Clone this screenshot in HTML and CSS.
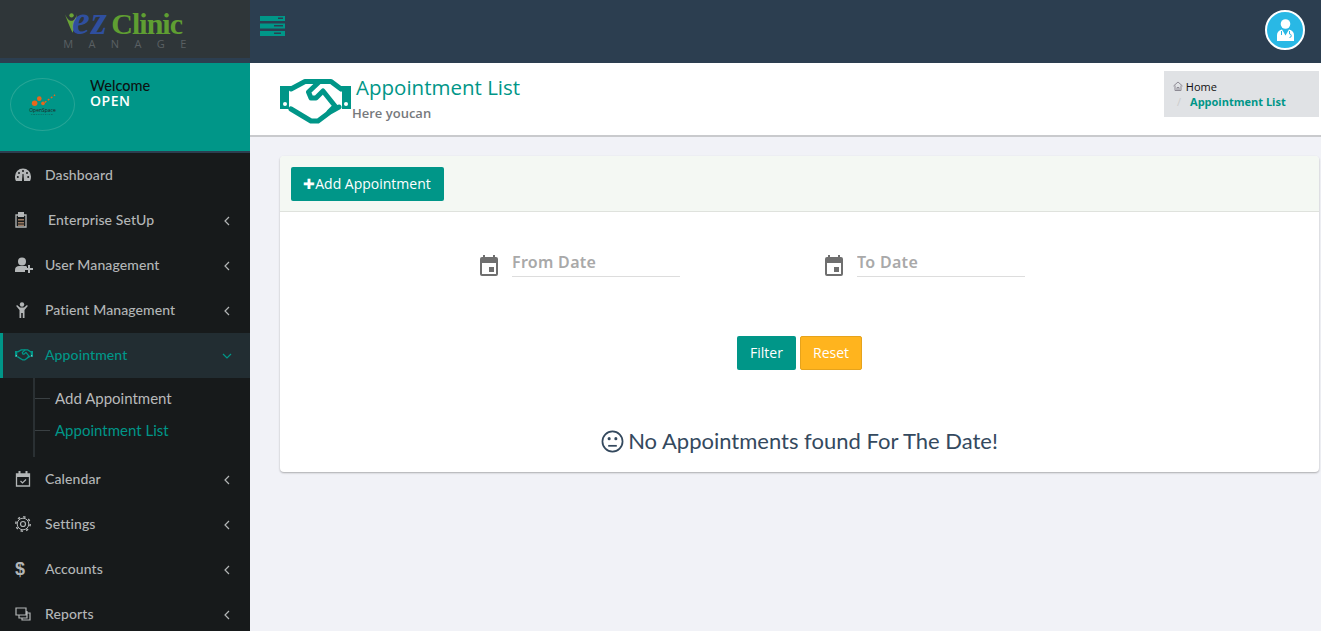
FILE: index.html
```html
<!DOCTYPE html>
<html lang="en">
<head>
  <meta charset="UTF-8">
  <title>Appointment List</title>
  <link rel="stylesheet" href="styles.css">
</head>
<body>

<svg class="defs" width="0" height="0">
  <symbol id="shake" viewBox="0 0 71 45">
    <path fill="currentColor" d="M0 7h13l-4 4v19H0zM71 7H59l3 4v19h9z"/>
    <g fill="none" stroke="currentColor" stroke-width="5" stroke-linecap="round" stroke-linejoin="round">
      <path d="M11 10L25 2.500h26L61 10"/>
      <path d="M11 30l20 12h7l12-9 9-5"/>
      <path d="M39 3L28.500 13l2.500 6h5l7-7 12 15-6 6"/>
    </g>
    <circle cx="5" cy="25" r="2" fill="#fff"/>
    <circle cx="66" cy="25" r="2" fill="#fff"/>
  </symbol>
  <symbol id="chev-left" viewBox="0 0 8 12">
    <path d="M6 2L2 6l4 4" fill="none" stroke="currentColor" stroke-width="1.200"/>
  </symbol>
  <symbol id="cal" viewBox="0 0 18 21">
    <path fill="currentColor" d="M3 0h2v2h8V0h2v2h1a2 2 0 0 1 2 2v15a2 2 0 0 1-2 2H2a2 2 0 0 1-2-2V4a2 2 0 0 1 2-2h1zM2 8v11h14V8z"/>
    <path fill="currentColor" d="M9 12h5v5H9z"/>
  </symbol>
</svg>

<div class="app">

  <div class="brand">
    <div class="logo">
      <div class="logo-top">
        <svg class="logo-man" width="12" height="22" viewBox="0 0 11 20">
          <circle cx="6" cy="3" r="2" fill="#6aa436"/>
          <path d="M0 2c2 4 3 5 5 6h2c2-1 3-3 4-6-1 6-2 11-4 17C5 15 2 8 0 2z" fill="#6aa436"/>
        </svg>
        <span class="logo-ez">ez</span>
        <span class="logo-clinic">Clinic</span>
      </div>
      <div class="logo-sub">MANAGE</div>
    </div>
  </div>

  <header class="topbar">
    <svg class="menu-toggle" width="25" height="20" viewBox="0 0 25 20">
      <path fill="#009688" d="M0 0h25v5H0zM0 7.500h25v5H0zM0 15h25v5H0z"/>
      <path fill="#2c3e50" d="M18 1.500h5v1.500h-5zM14 9h9v1.500h-9zM14 16.500h7v1.500h-7z"/>
    </svg>
    <span class="avatar">
      <svg width="17" height="22" viewBox="0 0 17 22">
        <circle cx="8.500" cy="5" r="4.800" fill="#fff"/>
        <path fill="#fff" d="M5 10.500C2 11.500 0 13 0 16v6h17v-6c0-3-2-4.500-5-5.500l-3.500 6z"/>
        <path fill="none" stroke="#29b8e5" stroke-width="1" d="M4.500 12v4M12.500 12v3a1.500 1.500 0 0 1 0 3.500"/>
      </svg>
    </span>
  </header>

  <aside class="sidebar">
    <div class="welcome">
      <div class="org-logo">
        <svg width="30" height="13" viewBox="0 0 30 14">
          <circle cx="6" cy="10" r="3" fill="#e8671c"/>
          <circle cx="11" cy="5" r="2.500" fill="#e8671c"/>
          <circle cx="15" cy="10" r="2" fill="#e8671c"/>
          <path d="M17 9l11-8" stroke="#e8671c" stroke-width="1.500" stroke-dasharray="2 2"/>
        </svg>
        <span class="org-name">OpenSpace</span>
        <span class="org-tag">CONSULTING</span>
      </div>
      <div class="welcome-text">
        <div class="welcome-hello">Welcome</div>
        <div class="welcome-name">OPEN</div>
      </div>
    </div>

    <nav class="menu">
      <a class="menu-item">
        <svg class="menu-icon" viewBox="0 0 16 16">
          <path fill="currentColor" d="M8 1.500a8 8 0 0 0-8 8c0 2 .5 3.500 1 4.500h14c.5-1 1-2.500 1-4.500a8 8 0 0 0-8-8z"/>
          <g fill="#171a1b"><circle cx="8" cy="4" r="1"/><circle cx="4" cy="6" r="1"/><circle cx="12" cy="6" r="1"/><circle cx="2.800" cy="10" r="1"/><circle cx="13.200" cy="10" r="1"/><path d="M7 14l.5-7h1l.5 7z"/></g>
        </svg>
        <span class="menu-label">Dashboard</span>
      </a>
      <a class="menu-item">
        <svg class="menu-icon menu-icon-narrow" viewBox="0 0 12 16">
          <path fill="none" stroke="currentColor" stroke-width="1.300" d="M1 3h10v12H1z"/>
          <path fill="currentColor" d="M3 0h6v5H3z"/>
          <path fill="#9a7a62" d="M3 7h6v1.500H3zM3 10h6v1.500H3zM3 12.500h6V14H3z"/>
        </svg>
        <span class="menu-label menu-label-wide">Enterprise SetUp</span>
        <svg class="chev"><use href="#chev-left"/></svg>
      </a>
      <a class="menu-item">
        <svg class="menu-icon menu-icon-wide" viewBox="0 0 18 16"><circle cx="7" cy="4.500" r="4" fill="currentColor"/><path fill="currentColor" d="M0 15v-2c0-3 2-4 4-4h6c1 0 2 .5 2 1v2h-2v3z"/><path fill="currentColor" d="M13 8h2v3h3v2h-3v3h-2v-3h-3v-2h3z"/></svg>
        <span class="menu-label">User Management</span>
        <svg class="chev"><use href="#chev-left"/></svg>
      </a>
      <a class="menu-item">
        <svg class="menu-icon" viewBox="0 0 16 16"><circle cx="7" cy="2.500" r="2.200" fill="currentColor"/><path fill="currentColor" d="M2 3l3 2.500h4L12 3l.8 1L9.500 8v8H7.800v-5H6.200v5H4.500V8L1.200 4z"/></svg>
        <span class="menu-label">Patient Management</span>
        <svg class="chev"><use href="#chev-left"/></svg>
      </a>
      <a class="menu-item menu-item-open">
        <svg class="menu-icon menu-icon-wide"><use href="#shake"/></svg>
        <span class="menu-label">Appointment</span>
        <svg class="chev chev-down" viewBox="0 0 12 8"><path d="M2 2l4 4 4-4" fill="none" stroke="currentColor" stroke-width="1.200"/></svg>
      </a>
      <div class="submenu">
        <a class="sub-item">Add Appointment</a>
        <a class="sub-item sub-item-active">Appointment List</a>
      </div>
      <a class="menu-item">
        <svg class="menu-icon" viewBox="0 0 15 16"><path fill="none" stroke="currentColor" stroke-width="1.300" d="M1 3h13v12H1z"/><path fill="currentColor" d="M1 3h13v3H1zM3 0h2v3H3zM10 0h2v3h-2z"/><path fill="none" stroke="currentColor" stroke-width="1.200" d="M5 10l2 2 3.500-3.500"/></svg>
        <span class="menu-label">Calendar</span>
        <svg class="chev"><use href="#chev-left"/></svg>
      </a>
      <a class="menu-item">
        <svg class="menu-icon" viewBox="0 0 16 16">
          <g fill="none" stroke="currentColor">
            <circle cx="8" cy="8" r="2.500" stroke-width="1.200"/>
            <circle cx="8" cy="8" r="5.800" stroke-width="1"/>
            <circle cx="8" cy="8" r="7.200" stroke-width="1.500" stroke-dasharray="2.400 3.250"/>
          </g>
        </svg>
        <span class="menu-label">Settings</span>
        <svg class="chev"><use href="#chev-left"/></svg>
      </a>
      <a class="menu-item">
        <span class="menu-icon menu-dollar">$</span>
        <span class="menu-label">Accounts</span>
        <svg class="chev"><use href="#chev-left"/></svg>
      </a>
      <a class="menu-item">
        <svg class="menu-icon" viewBox="0 0 16 14"><path fill="none" stroke="currentColor" stroke-width="1.200" d="M1 1h10v7H1zM4 8v3h8V4M7 11v2h8V6h-3"/></svg>
        <span class="menu-label">Reports</span>
        <svg class="chev"><use href="#chev-left"/></svg>
      </a>
    </nav>
  </aside>

  <main class="content">
    <section class="page-head">
      <svg class="page-icon"><use href="#shake"/></svg>
      <div class="page-titles">
        <h1>Appointment List</h1>
        <p>Here youcan</p>
      </div>
      <div class="crumbs">
        <div class="crumb-home">
          <svg width="10" height="10" viewBox="0 0 10 10"><path fill="none" stroke="#8d8a94" d="M.500 5L5 1l4.500 4M2 4.500v5h6v-5M4 9.500V6.500h2v3"/></svg>
          Home
        </div>
        <div class="crumb-current"><span class="crumb-sep">/</span>Appointment List</div>
      </div>
    </section>

    <section class="card">
      <div class="card-head">
        <button class="btn btn-teal btn-add"><span class="plus">&#10010;</span>Add Appointment</button>
      </div>
      <div class="card-body">
        <div class="date-row">
          <div class="date-field">
            <svg class="date-icon"><use href="#cal"/></svg>
            <input class="date-input" placeholder="From Date">
          </div>
          <div class="date-field">
            <svg class="date-icon"><use href="#cal"/></svg>
            <input class="date-input" placeholder="To Date">
          </div>
        </div>
        <div class="actions">
          <button class="btn btn-teal">Filter</button>
          <button class="btn btn-amber">Reset</button>
        </div>
        <h2 class="empty">
          <svg width="23" height="23" viewBox="0 0 24 24"><g fill="none" stroke="#34495e" stroke-width="1.800"><circle cx="12" cy="12" r="10.500"/><path d="M7.500 16.500h9"/></g><circle cx="8.500" cy="9" r="1.600" fill="#34495e"/><circle cx="15.500" cy="9" r="1.600" fill="#34495e"/></svg>
          No Appointments found For The Date!
        </h2>
      </div>
    </section>
  </main>

</div>

</body>
</html>
```

FILE: styles.css
```css
* { box-sizing: border-box; }
html, body { height: 100%; }
body { margin: 0; font-family: "Open Sans", sans-serif; background: #f1f2f7; color: #333; overflow: hidden; }
.defs { position: absolute; }
a { cursor: pointer; text-decoration: none; }

.app { display: grid; grid-template-columns: 250px 1fr; grid-template-rows: 63px 1fr; height: 100vh; }

/* top row */
.brand { background: #2c3e50; padding-bottom: 5px; }
.logo { height: 58px; background: #2f3639; display: flex; flex-direction: column; align-items: center; padding-top: 6px; }
.logo-top { display: flex; align-items: baseline; height: 30px; margin-left: -3px; }
.logo-man { align-self: flex-start; margin: 6px -5px 0 0; }
.logo-ez { font: italic bold 40px/30px "Liberation Serif", serif; color: #2f4f9f; letter-spacing: 1.500px; }
.logo-clinic { font: bold 30px/30px "Liberation Serif", serif; color: #5f9e32; margin-left: 3px; letter-spacing: -1px; }
.logo-sub { font: 11px/12px "Open Sans", sans-serif; color: #5a6063; letter-spacing: 15.400px; margin: 2px -15px 0 0; }

.topbar { background: #2c3e50; display: flex; justify-content: space-between; padding: 16px 16px 0 10px; }
.menu-toggle { display: block; }
.avatar { width: 40px; height: 40px; margin-top: -6px; border-radius: 50%; background: #29b8e5; border: 2px solid #fff; display: flex; align-items: center; justify-content: center; }

/* sidebar */
.sidebar { background: #171a1b; overflow: hidden; }
.welcome { height: 90px; background: #009688; border-bottom: 2px solid #2c3e50; display: flex; padding: 15px 0 0 10px; }
.org-logo { width: 65px; height: 53px; border-radius: 50%; border: 1px solid #26a596; display: flex; flex-direction: column; align-items: center; justify-content: center; }
.org-name { font-size: 5px; line-height: 6px; color: #222; }
.org-tag { font-size: 2px; line-height: 3px; color: #222; letter-spacing: 1px; }
.welcome-text { margin-left: 15px; }
.welcome-hello { font: 500 14.500px/15px Lato, sans-serif; color: #0c1212; }
.welcome-name { font: 600 14px/15px "Open Sans", sans-serif; color: #fff; letter-spacing: .5px; }

.menu { display: flex; flex-direction: column; }
.menu-item { height: 45px; flex: none; display: flex; align-items: center; padding: 0 0 2px 15px; color: #b3b6b7; font: 500 14px Lato, sans-serif; letter-spacing: .1px; }
.menu-icon { width: 16px; height: 16px; flex: none; }
.menu-icon-narrow { width: 12px; }
.menu-icon-wide { width: 18px; }
.menu-label { margin-left: 14px; }
.menu-icon-narrow + .menu-label-wide { margin-left: 21px; }
.menu-icon-wide + .menu-label { margin-left: 12px; }
.menu-dollar { font: bold 18px/16px "Liberation Sans", sans-serif; }
.chev { width: 8px; height: 12px; margin: 2px 19px 0 auto; }
.chev-down { width: 12px; height: 8px; margin: 2px 17px 0 auto; }
.menu-item-open { background: #222d32; color: #009688; box-shadow: inset 3px 0 0 #009688; }

.submenu { height: 79px; flex: none; margin-left: 33px; padding-top: 4px; border-left: 2px solid #2a3033; display: flex; flex-direction: column; }
.sub-item { height: 32px; display: flex; align-items: center; font: 15px Lato, sans-serif; color: #b7b9ba; padding-left: 20px; position: relative; }
.sub-item::before { content: ""; position: absolute; left: 0; top: 16px; width: 15px; height: 1px; background: #3a4043; }
.sub-item-active { color: #009688; }

/* page */
.content { min-width: 0; }
.page-head { height: 74px; background: #fff; border-bottom: 2px solid #c9cacd; display: flex; padding: 8px 2px 0 30px; }
.page-icon { width: 71px; height: 45px; color: #009688; margin-top: 8px; }
.page-titles { margin-left: 1px; }
.page-titles h1 { margin: 0 0 0 4px; font: 400 20.500px/32px "Open Sans", sans-serif; color: #009688; }
.page-titles p { margin: 2px 0 0 0; font: 600 13px/16px "Open Sans", sans-serif; color: #76797c; }
.crumbs { width: 155px; height: 46px; margin-left: auto; background: #e0e2e5; padding: 8px 0 0 9px; font-size: 11px; line-height: 15px; }
.crumb-home { color: #111; }
.crumb-current { font-weight: 700; color: #009688; }
.crumb-sep { color: #ccc; font-weight: 400; margin: 0 9px 0 4px; }

.card { margin: 19px 2px 0 30px; height: 316px; background: #fff; border-radius: 4px; box-shadow: 0 1px 2px rgba(0,0,0,.3); }
.card-head { height: 56px; background: #f4f8f3; border-bottom: 1px solid #dfe2dd; border-radius: 4px 4px 0 0; padding: 11px; }
.btn { border: 1px solid transparent; border-radius: 2px; height: 34px; font: 14px "Open Sans", sans-serif; color: #fff; padding: 0 12px 2px; cursor: pointer; }
.btn-teal { background: #009688; }
.btn-add { width: 153px; padding: 0 1px 2px 0; }
.plus { font-size: 14px; }
.btn-amber { background: #ffb41e; border-color: #e6a31c; }

.card-body { display: flex; flex-direction: column; }
.date-row { display: flex; gap: 145px; padding: 37px 0 0 200px; }
.date-field { display: flex; align-items: flex-start; gap: 14px; width: 200px; }
.date-icon { width: 18px; height: 21px; color: #6f6f6f; margin-top: 6px; flex: none; }
.date-input { width: 168px; height: 28px; border: 0; border-bottom: 1px solid #ddd; outline: 0; padding: 0 0 2px; font: 600 16px "Noto Sans", sans-serif; letter-spacing: .3px; background: transparent; }
.date-input::placeholder { color: #a9a9a9; opacity: 1; }

.actions { display: flex; justify-content: center; gap: 4px; margin-top: 59px; }
.actions .btn { width: 59px; padding: 0 0 2px; }
.actions .btn-amber { width: 62px; }

.empty { margin: 56px 0 0; display: flex; justify-content: center; align-items: center; gap: 4px; font: 400 22px/30px Lato, sans-serif; color: #34495e; }
```
